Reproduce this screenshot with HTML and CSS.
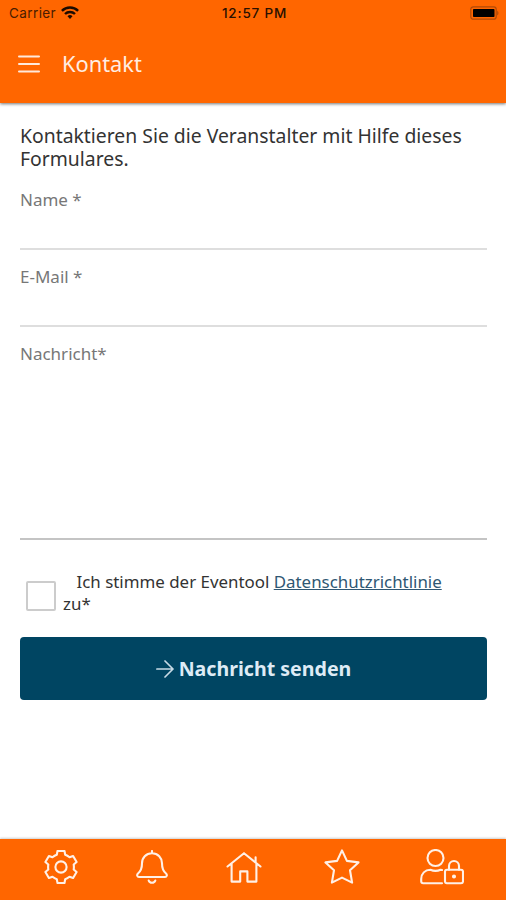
FILE: index.html
```html
<!DOCTYPE html>
<html lang="de">

<head>
    <meta charset="UTF-8">
    <meta name="viewport" content="width=device-width, initial-scale=1.0">
    <title>Kontakt</title>
    <link rel="stylesheet" href="styles.css">
</head>

<body>

    <!-- Header -->
    <header class="header">
        <div class="status-bar">
            <div class="carrier">
                <span>Carrier</span>
                <svg class="wifi" viewBox="0 0 18 13" width="18" height="13" fill="none" stroke="#1c0b00" stroke-width="2.4">
                    <path d="M0.9 4.9a11.5 11.5 0 0 1 16.2 0" />
                    <path d="M4 8a7.1 7.1 0 0 1 10 0" />
                    <path d="M9 12.9L6.5 10.3a3.6 3.6 0 0 1 5 0z" fill="#1c0b00" stroke="none" />
                </svg>
            </div>
            <div class="time">12:57 PM</div>
            <div class="battery">
                <svg viewBox="0 0 30 14" width="30" height="14">
                    <rect x="0.8" y="0.8" width="25.4" height="12.4" rx="2.5" fill="none" stroke="#b04a08" stroke-width="1.2" />
                    <rect x="3" y="3" width="21.5" height="8" rx="0.8" fill="#000" />
                    <path d="M27.2 4.4q2.6 2.6 0 5.2z" fill="#b04a08" />
                </svg>
            </div>
        </div>
        <div class="navbar">
            <svg class="menu" viewBox="0 0 22 18" width="22" height="18" stroke="#ffe9db" stroke-width="2" stroke-linecap="round">
                <path d="M1 1.4h20M1 9h20M1 16.6h20" />
            </svg>
            <h1>Kontakt</h1>
        </div>
    </header>

    <!-- Contact Form -->
    <form class="contact-form">
        <p class="intro">Kontaktieren Sie die Veranstalter mit Hilfe dieses Formulares.</p>

        <div class="field">
            <label for="name">Name *</label>
            <input type="text" id="name">
        </div>
        <div class="field">
            <label for="email">E-Mail *</label>
            <input type="email" id="email">
        </div>
        <div class="field">
            <label for="message">Nachricht*</label>
            <textarea id="message"></textarea>
        </div>

        <div class="consent">
            <input type="checkbox" id="consent">
            <label for="consent">Ich stimme der Eventool <a href="#">Datenschutzrichtlinie</a> zu*</label>
        </div>

        <button type="button" class="send-btn">
            <svg viewBox="0 0 18 18" width="18" height="18" fill="none" stroke="#c8dbe6" stroke-width="1.7" stroke-linecap="round" stroke-linejoin="round">
                <path d="M0.9 9h16M9 1l8 8-8 8" />
            </svg>
            <span>Nachricht senden</span>
        </button>
    </form>

    <!-- Tab Bar -->
    <nav class="tabs">
        <a href="#">
            <svg viewBox="-17 -17 34 34" width="34" height="34">
                <path d="M-3.5-16H3.5L4.2-12.2Q6.5-11.4 8.5-9.7L12.1-11 15.6-5 12.7-2.5Q13.1 0 12.7 2.5L15.6 5 12.1 11 8.5 9.7Q6.5 11.4 4.2 12.2L3.5 16H-3.5L-4.2 12.2Q-6.5 11.4-8.5 9.7L-12.1 11-15.6 5-12.7 2.5Q-13.1 0-12.7-2.5L-15.6-5-12.1-11-8.5-9.7Q-6.5-11.4-4.2-12.2Z" />
                <circle r="5.6" />
            </svg>
        </a>
        <a href="#">
            <svg viewBox="0 0 32 34" width="32" height="34">
                <path d="M16 1v2.2M16 3.2C10 3.2 6 7.8 6 13.2C6 19 4.6 21.2 2.2 23.2C0.4 24.8 1.2 27 3 27H29C30.8 27 31.6 24.8 29.8 23.2C27.4 21.2 26 19 26 13.2C26 7.8 22 3.2 16 3.2Z" />
                <path d="M12.7 30.6a3.5 3.2 0 0 0 6.6 0" />
            </svg>
        </a>
        <a href="#">
            <svg viewBox="0 0 36 32" width="36" height="32">
                <path d="M1.5 15.5L18 2.2 34.5 15.5M5.6 12.5V30.6H14.2V20.4H21.4V30.6H30.4V12.5M29.6 11.2V6.2" />
            </svg>
        </a>
        <a href="#" class="favorites">
            <svg viewBox="0 0 36 35" width="36" height="35">
                <path d="M18 1.4L22.9 11.9 34.5 13.4 26 21.3 28.1 33.6 18 28.6 7.9 33.6 10 21.3 1.5 13.4 13.1 11.9Z" />
            </svg>
        </a>
        <a href="#" class="account">
            <svg viewBox="0 0 44 36" width="44" height="36">
                <circle cx="15.5" cy="9" r="8" />
                <path d="M22 34.3H3.2Q1.2 34.3 1.2 32.3V30C1.2 24.6 5 20.8 10.4 20.8Q15.5 23 20.6 20.8L22 21" />
                <rect x="25" y="20.8" width="18" height="13.5" rx="2" />
                <path d="M29 20.8V17a5 5 0 0 1 10 0v3.8" />
                <circle cx="34" cy="27.5" r="1" />
            </svg>
        </a>
    </nav>

</body>

</html>
```
FILE: styles.css
```css
* {
    box-sizing: border-box;
}

body {
    font-family: "Noto Sans", "Open Sans", sans-serif;
    background: #fff;
    margin: 0;
    height: 900px;
    display: flex;
    flex-direction: column;
}

/* Header Section */
.header {
    background-color: #ff6600;
    height: 103px;
    box-shadow: 0 1px 3px rgba(0, 0, 0, 0.55);
}

.status-bar {
    display: grid;
    grid-template-columns: 1fr auto 1fr;
    align-items: center;
    height: 26px;
    padding: 0 6px 0 9px;
    font-family: Inter, "Liberation Sans", sans-serif;
    font-size: 13.5px;
    color: #4a1c00;
}

.carrier {
    display: flex;
    align-items: center;
    gap: 5px;
    letter-spacing: 0.4px;
}

.wifi {
    margin-top: -2px;
}

.time {
    font-weight: 500;
    letter-spacing: 0.8px;
    color: #2a1000;
}

.battery {
    display: flex;
    justify-content: flex-end;
}

.navbar {
    display: flex;
    align-items: center;
    gap: 22px;
    height: 76px;
    padding-left: 18px;
}

.navbar h1 {
    margin: -2px 0 0;
    font-size: 21.8px;
    font-weight: 400;
    color: #ffede2;
}

/* Contact Form */
.contact-form {
    flex: 1;
    padding: 21px 19px 0 20px;
}

.intro {
    margin: 0 0 19px;
    font-size: 19.37px;
    line-height: 23px;
    color: #333;
}

.field {
    display: flex;
    flex-direction: column;
    margin-bottom: 16px;
}

.field label {
    font-size: 17px;
    line-height: 22px;
    color: #777;
}

.field input,
.field textarea {
    height: 39px;
    padding: 0;
    border: none;
    border-bottom: 2px solid #dedede;
    background: none;
    font: inherit;
    outline: none;
    resize: none;
}

.field textarea {
    height: 175px;
    border-bottom-color: #c4c4c4;
}

.consent {
    display: flex;
    align-items: center;
    gap: 7px;
    margin: 31px 0 22px 6px;
}

.consent input {
    appearance: none;
    flex: none;
    width: 30px;
    height: 30px;
    margin: 6px 0 0;
    border: 2px solid #ccc;
    border-radius: 2px;
}

.consent label {
    max-width: 400px;
    font-size: 16.9px;
    line-height: 22px;
    text-indent: 13.5px;
    color: #333;
}

.consent a {
    color: #2f5773;
}

.send-btn {
    display: flex;
    align-items: center;
    justify-content: center;
    gap: 5px;
    width: 100%;
    height: 63px;
    border: none;
    border-radius: 4px;
    background: #004562;
    color: #deebf5;
    font: bold 19.6px "Noto Sans", "Open Sans", sans-serif;
    cursor: pointer;
}

/* Tab Bar */
.tabs {
    display: flex;
    align-items: center;
    gap: 58px;
    height: 61px;
    padding: 0 42px 6px 44px;
    background: #ff6600;
    box-shadow: 0 -1px 2px rgba(0, 0, 0, 0.2);
}

.tabs a {
    display: flex;
}

.tabs .favorites {
    margin-left: 4px;
}

.tabs .account {
    margin-left: 2px;
}

.tabs svg {
    fill: none;
    stroke: #fff0e6;
    stroke-width: 2.1;
    stroke-linecap: round;
    stroke-linejoin: round;
}
```
